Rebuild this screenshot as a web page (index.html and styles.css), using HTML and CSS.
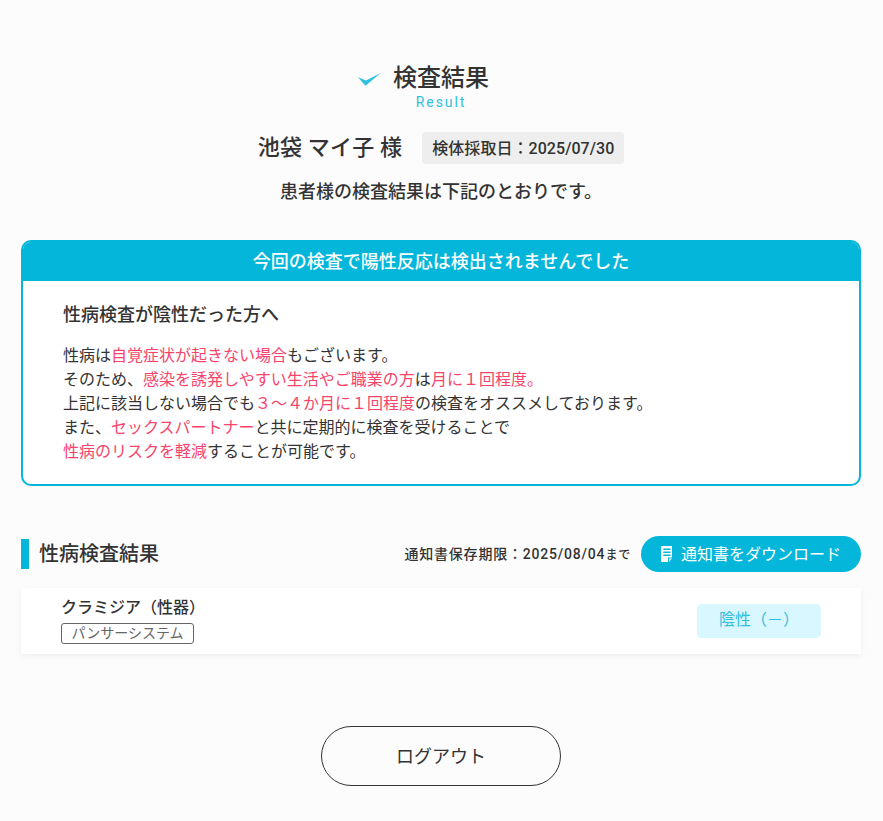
FILE: index.html
```html
<!DOCTYPE html>
<html lang="ja">
<head>
  <meta charset="UTF-8">
  <meta name="viewport" content="width=device-width, initial-scale=1.0">
  <title>検査結果</title>
  <link rel="stylesheet" href="styles.css">
</head>
<body>
<div class="container">
  <header class="page-head">
    <h1 class="page-title">
      <svg class="title-check" width="23" height="14" viewBox="0 0 23 14" aria-hidden="true">
        <path d="M0 4.2 L8 7.5 L22.8 0 L7.5 12.8 Z" fill="#2fbfdf"/>
      </svg>
      検査結果
    </h1>
    <p class="page-sub">Result</p>
  </header>

  <div class="patient">
    <span class="patient-name">池袋 マイ子 様</span>
    <span class="patient-date">検体採取日：2025/07/30</span>
  </div>
  <p class="lead">患者様の検査結果は下記のとおりです。</p>

  <section class="notice">
    <h2 class="notice-head">今回の検査で陽性反応は検出されませんでした</h2>
    <div class="notice-body">
      <h3 class="notice-title">性病検査が陰性だった方へ</h3>
      <p class="notice-text">
        性病は<span class="em">自覚症状が起きない場合</span>もございます。<br>
        そのため、<span class="em">感染を誘発しやすい生活やご職業の方</span>は<span class="em">月に１回程度。</span><br>
        上記に該当しない場合でも<span class="em">３～４か月に１回程度</span>の検査をオススメしております。<br>
        また、<span class="em">セックスパートナー</span>と共に定期的に検査を受けることで<br>
        <span class="em">性病のリスクを軽減</span>することが可能です。
      </p>
    </div>
  </section>

  <section class="results">
    <div class="results-head">
      <h2 class="results-title">性病検査結果</h2>
      <div class="results-tools">
        <span class="expire">通知書保存期限：2025/08/04<small>まで</small></span>
        <a href="#" class="btn-download">
          <svg class="doc-icon" width="11" height="16" viewBox="0 0 11 16" aria-hidden="true">
            <path fill-rule="evenodd" fill="#fff" d="M0 0H11V11.5H7V16H0Z M2.3 2.6V4H9.5V2.6Z M2.3 5.6V7H9.5V5.6Z M2.3 8.6V10H9.5V8.6Z"/>
            <path fill="#fff" d="M8 12.5H11L8 16Z"/>
          </svg>
          通知書をダウンロード
        </a>
      </div>
    </div>
    <div class="result-row">
      <div class="result-info">
        <div class="result-name">クラミジア（性器）</div>
        <span class="result-tag">パンサーシステム</span>
      </div>
      <div class="result-value">陰性（－）</div>
    </div>
  </section>

  <div class="logout-wrap">
    <a href="#" class="btn-logout">ログアウト</a>
  </div>
</div>
</body>
</html>
```

FILE: styles.css
```css
html, body {
  margin: 0;
  height: 100%;
}
body {
  background: #fcfcfc;
  color: #333;
  font-family: Roboto, "Noto Sans CJK JP", sans-serif;
  overflow: hidden;
}
h1, h2, h3, p {
  margin: 0;
}
a {
  text-decoration: none;
  color: inherit;
}
.container {
  padding: 64px 22px 0 21px;
}
.page-head {
  text-align: center;
}
.page-title {
  position: relative;
  display: inline-block;
  font-size: 24px;
  line-height: 28px;
  font-weight: 500;
}
.title-check {
  position: absolute;
  left: -35.5px;
  top: 8.5px;
}
.page-sub {
  font-size: 14px;
  line-height: 20px;
  letter-spacing: 1.9px;
  color: #2fbfdf;
}
.patient {
  margin-top: 20px;
  display: flex;
  justify-content: center;
  align-items: center;
  gap: 20px;
}
.patient-name {
  font-size: 22px;
  line-height: 26px;
  font-weight: 500;
  letter-spacing: .2px;
}
.patient-date {
  background: #eee;
  border-radius: 4px;
  padding: 1px 10px 0;
  font-size: 16px;
  line-height: 31px;
  font-weight: 500;
  letter-spacing: .05px;
}
.lead {
  margin-top: 14px;
  text-align: center;
  font-size: 18px;
  line-height: 28px;
  font-weight: 500;
}
.notice {
  margin-top: 34px;
  border: 2px solid #04b7da;
  border-radius: 10px;
  overflow: hidden;
  background: #fff;
}
.notice-head {
  background: #04b7da;
  color: #fff;
  text-align: center;
  font-size: 18px;
  font-weight: 500;
  line-height: 39px;
}
.notice-body {
  padding: 21px 40px 20px;
}
.notice-title {
  font-size: 18px;
  line-height: 26px;
  font-weight: 500;
}
.notice-text {
  margin-top: 16px;
  font-size: 16px;
  line-height: 24px;
}
.em {
  color: #f8446b;
}
.results {
  margin-top: 50px;
}
.results-head {
  display: flex;
  justify-content: space-between;
  align-items: center;
}
.results-title {
  font-size: 20px;
  line-height: 30px;
  font-weight: 500;
  border-left: 8px solid #04b7da;
  padding-left: 10px;
}
.results-tools {
  display: flex;
  align-items: center;
  gap: 10px;
}
.expire {
  font-size: 14px;
  font-weight: 500;
  letter-spacing: .8px;
  margin-bottom: 2px;
}
.expire small {
  font-size: 12px;
}
.btn-download {
  display: flex;
  align-items: center;
  gap: 9px;
  background: #04b7da;
  color: #fff;
  border-radius: 18px;
  padding: 0 20px 2px;
  height: 36px;
  box-sizing: border-box;
  font-size: 16px;
}
.doc-icon {
  margin-top: 2px;
}
.result-row {
  margin-top: 16px;
  background: #fff;
  box-shadow: 0 2px 6px rgba(0,0,0,.06);
  display: flex;
  justify-content: space-between;
  align-items: center;
  padding: 8px 40px;
  height: 66px;
  box-sizing: border-box;
}
.result-name {
  font-size: 16px;
  line-height: 20px;
  font-weight: 500;
}
.result-tag {
  display: inline-block;
  margin-top: 5px;
  border: 1px solid #666;
  border-radius: 3px;
  padding: 0 9.5px;
  font-size: 14px;
  line-height: 19px;
  color: #666;
  vertical-align: top;
}
.result-value {
  width: 124px;
  height: 34px;
  line-height: 32px;
  background: #d8f7fe;
  color: #2fbfdf;
  border-radius: 5px;
  text-align: center;
  font-size: 16px;
}
.logout-wrap {
  margin-top: 72px;
  display: flex;
  justify-content: center;
}
.btn-logout {
  width: 240px;
  height: 60px;
  box-sizing: border-box;
  padding-bottom: 3px;
  border: 1px solid #333;
  border-radius: 30px;
  display: flex;
  justify-content: center;
  align-items: center;
  font-size: 18px;
}
```
